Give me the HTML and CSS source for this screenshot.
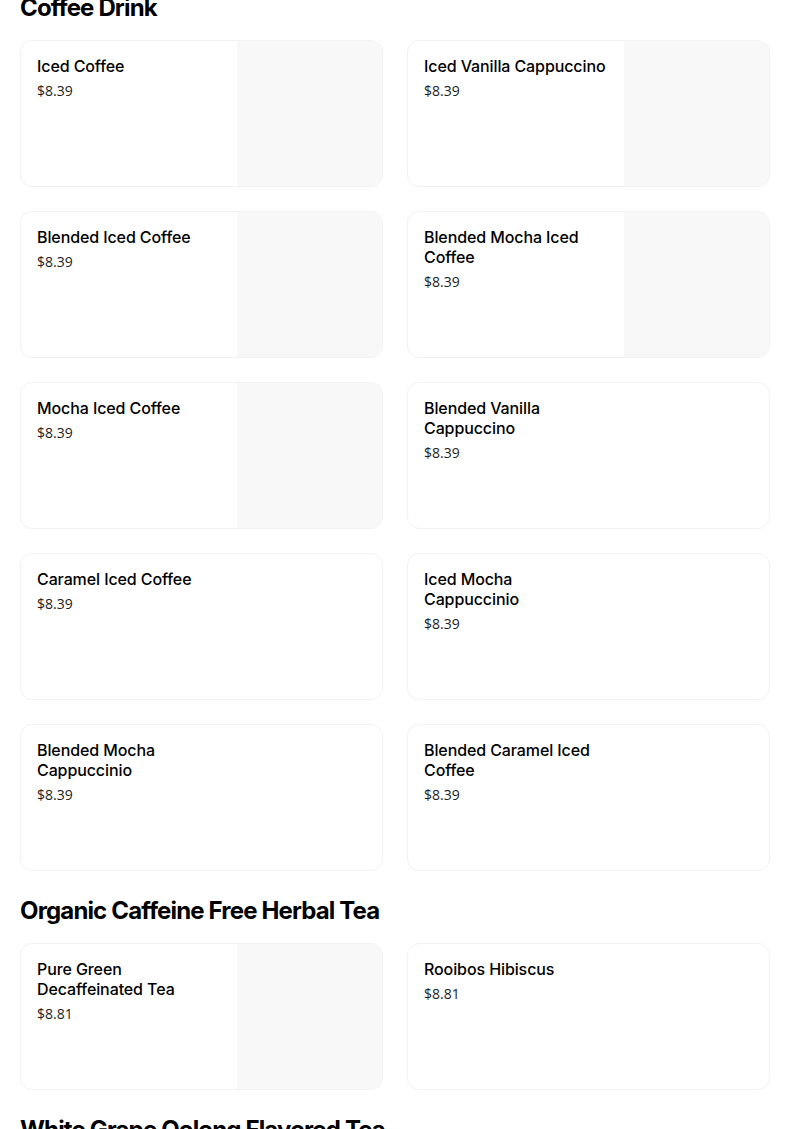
FILE: index.html
```html
<!DOCTYPE html>
<html lang="en">
<head>
<meta charset="utf-8">
<title>Menu</title>
<link rel="stylesheet" href="styles.css">
</head>
<body>
<main class="menu">
  <section class="section">
    <h2 class="section-title">Coffee Drink</h2>
    <ul class="grid">
      <li class="card"><div class="info"><div class="name">Iced Coffee</div><div class="price">$8.39</div></div><div class="thumb"></div></li>
      <li class="card"><div class="info"><div class="name">Iced Vanilla Cappuccino</div><div class="price">$8.39</div></div><div class="thumb"></div></li>
      <li class="card"><div class="info"><div class="name">Blended Iced Coffee</div><div class="price">$8.39</div></div><div class="thumb"></div></li>
      <li class="card"><div class="info"><div class="name">Blended Mocha Iced Coffee</div><div class="price">$8.39</div></div><div class="thumb"></div></li>
      <li class="card"><div class="info"><div class="name">Mocha Iced Coffee</div><div class="price">$8.39</div></div><div class="thumb"></div></li>
      <li class="card"><div class="info"><div class="name">Blended Vanilla Cappuccino</div><div class="price">$8.39</div></div></li>
      <li class="card"><div class="info"><div class="name">Caramel Iced Coffee</div><div class="price">$8.39</div></div></li>
      <li class="card"><div class="info"><div class="name">Iced Mocha Cappuccinio</div><div class="price">$8.39</div></div></li>
      <li class="card"><div class="info"><div class="name">Blended Mocha Cappuccinio</div><div class="price">$8.39</div></div></li>
      <li class="card"><div class="info"><div class="name">Blended Caramel Iced Coffee</div><div class="price">$8.39</div></div></li>
    </ul>
  </section>
  <section class="section">
    <h2 class="section-title">Organic Caffeine Free Herbal Tea</h2>
    <ul class="grid">
      <li class="card"><div class="info"><div class="name">Pure Green Decaffeinated Tea</div><div class="price">$8.81</div></div><div class="thumb"></div></li>
      <li class="card"><div class="info"><div class="name">Rooibos Hibiscus</div><div class="price">$8.81</div></div></li>
    </ul>
  </section>
  <section class="section">
    <h2 class="section-title">White Grape Oolong Flavored Tea</h2>
  </section>
</main>
</body>
</html>
```
FILE: styles.css
```css
html, body {
  margin: 0;
  padding: 0;
  background: #fff;
}
body {
  font-family: Inter, "Liberation Sans", sans-serif;
  color: #000;
}
.menu {
  margin-top: -8px;
  padding: 0 34px 0 20px;
  display: flex;
  flex-direction: column;
  gap: 24px;
}
.section-title {
  margin: 0 0 16px;
  font-size: 24px;
  line-height: 32px;
  font-weight: 700;
  letter-spacing: -0.85px;
  font-family: Inter, "Liberation Sans", sans-serif;
}
.grid {
  list-style: none;
  margin: 0;
  padding: 0;
  display: grid;
  grid-template-columns: 1fr 1fr;
  gap: 24px;
}
.card {
  box-sizing: border-box;
  display: flex;
  height: 147px;
  border: 1px solid #f2f2f2;
  border-radius: 12px;
  overflow: hidden;
  background: #fff;
}
.info {
  width: 184px;
  padding: 15px 16px 16px;
  flex: none;
}
.name {
  font-size: 16px;
  line-height: 20px;
  font-weight: 500;
  letter-spacing: -0.1px;
  color: #000;
}
.price {
  margin-top: 5px;
  font-size: 14px;
  line-height: 20px;
  color: #222;
  font-family: "Open Sans", "Liberation Sans", sans-serif;
}
.thumb {
  margin-left: auto;
  width: 145px;
  align-self: stretch;
  background: #f8f8f8;
}
```
